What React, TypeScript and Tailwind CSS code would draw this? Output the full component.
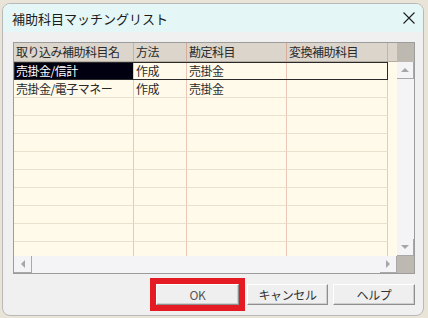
import React from 'react';

const cols = [
  { label: '取り込み補助科目名', w: 'w-[120px]' },
  { label: '方法', w: 'w-[53px]' },
  { label: '勘定科目', w: 'w-[100px]' },
  { label: '変換補助科目', w: 'w-[101px]' },
];

const rows = [
  ['売掛金/信計', '作成', '売掛金', ''],
  ['売掛金/電子マネー', '作成', '売掛金', ''],
  ['', '', '', ''],
  ['', '', '', ''],
  ['', '', '', ''],
  ['', '', '', ''],
  ['', '', '', ''],
  ['', '', '', ''],
  ['', '', '', ''],
  ['', '', '', ''],
  ['', '', '', ''],
];

const Tri: React.FC<{ dir: 'up' | 'down' | 'left' | 'right' }> = ({ dir }) => {
  const pts = {
    up: '1,6 5,2 9,6',
    down: '1,2 5,6 9,2',
    left: '6,1 2,5 6,9',
    right: '2,1 6,5 2,9',
  }[dir];
  const size = dir === 'up' || dir === 'down' ? { w: 10, h: 8 } : { w: 8, h: 10 };
  return (
    <svg width={size.w} height={size.h} viewBox={`0 0 ${size.w} ${size.h}`}>
      <polygon points={pts} fill="#a6a6a6" />
    </svg>
  );
};

const ScrollBtn: React.FC<{ dir: 'up' | 'down' | 'left' | 'right'; className?: string }> = ({ dir, className }) => (
  <div
    className={`flex items-center justify-center bg-[#f4f4f6] border-r border-b border-[#a8a8a8] ${className ?? ''}`}
  >
    <Tri dir={dir} />
  </div>
);

const Button: React.FC<{ label: string; className?: string; text?: string }> = ({ label, className, text }) => (
  <div
    className={`h-[21px] flex items-center justify-center bg-[#efefef] border border-t-white border-l-white border-r-[#8f8f8f] border-b-[#8f8f8f] shadow-[inset_-1px_-1px_0_#cfcfcf] text-[12px] tracking-[-0.4px] ${text ?? 'text-[#333]'} ${className ?? ''}`}
  >
    {label}
  </div>
);

export default function App() {
  return (
    <div
      className="w-[428px] h-[318px] bg-[#e9e4d7] pt-[3px] pl-[2px] overflow-hidden"
      style={{ fontFamily: '"Noto Sans CJK JP", "Noto Sans", sans-serif' }}
    >
      <div className="w-[422px] h-[313px] rounded-[8px] border border-[#b9b9b9] bg-[#f0f0f0] overflow-hidden flex flex-col">
        {/* title bar */}
        <div className="h-[28px] bg-[#e4f7f6] flex items-center justify-between pl-[9px] pr-[8px] shrink-0">
          <span className="text-[13px] text-[#1b1b1b] leading-none">補助科目マッチングリスト</span>
          <svg width="12" height="12" viewBox="0 0 12 12">
            <path d="M0.5 0.5 L11.5 11.5 M11.5 0.5 L0.5 11.5" stroke="#1f1f1f" strokeWidth="1.1" />
          </svg>
        </div>

        {/* grid */}
        <div className="mt-[10px] ml-[10px] w-[402px] h-[232px] border border-[#9c9c9c] flex flex-col shrink-0">
          <div className="flex flex-1 min-h-0">
            <div className="w-[383px] bg-[#fffaea] overflow-hidden">
              <div className="flex h-[19px] bg-[#dbd5cb] border-b border-[#b6aea2]">
                {cols.map((c) => (
                  <div
                    key={c.label}
                    className={`${c.w} shrink-0 border-r border-[#d4ad9c] pl-[2px] text-[12px] tracking-[-0.5px] leading-[18px] text-[#2a2a2a] whitespace-nowrap overflow-hidden`}
                  >
                    {c.label}
                  </div>
                ))}
                <div className="w-[9px] shrink-0" />
              </div>
              {rows.map((r, i) => (
                <div key={i} className="flex h-[18px]">
                  <div className={`flex ${i === 0 ? 'outline outline-1 -outline-offset-1 outline-[#2a2a2a]' : ''}`}>
                    {r.map((v, j) => (
                      <div
                        key={j}
                        className={`${cols[j].w} shrink-0 border-r border-b border-r-[#ecc6b6] border-b-[#e9e0cd] pl-[2px] text-[12px] tracking-[-0.5px] leading-[17px] whitespace-nowrap overflow-hidden ${
                          i === 0 && j === 0 ? 'bg-[#000010] text-white' : 'text-[#2a2a2a]'
                        }`}
                      >
                        {v}
                      </div>
                    ))}
                  </div>
                  <div className="w-[9px] shrink-0" />
                </div>
              ))}
            </div>
            {/* vertical scrollbar */}
            <div className="w-[17px] flex flex-col bg-[#f4f4f6]">
              <div className="h-[19px] bg-[#bdb9b1] shrink-0" />
              <ScrollBtn dir="up" className="h-[17px] shrink-0" />
              <div className="flex-1" />
              <ScrollBtn dir="down" className="h-[17px] shrink-0" />
            </div>
          </div>
          {/* horizontal scrollbar */}
          <div className="h-[17px] flex bg-[#f4f4f6] shrink-0">
            <ScrollBtn dir="left" className="w-[18px]" />
            <div className="flex-1" />
            <ScrollBtn dir="right" className="w-[17px]" />
            <div className="w-[17px] bg-[#bdb9b1]" />
          </div>
        </div>

        {/* buttons */}
        <div className="flex items-center mt-[4px] ml-[147px] shrink-0">
          <div className="border-[6px] border-[#e51b23] flex">
            <Button label="OK" className="w-[83px]" text="text-[#555]" />
          </div>
          <Button label="キャンセル" className="w-[81px] ml-[2px]" />
          <Button label="ヘルプ" className="w-[82px] ml-[5px]" />
        </div>
      </div>
    </div>
  );
}
